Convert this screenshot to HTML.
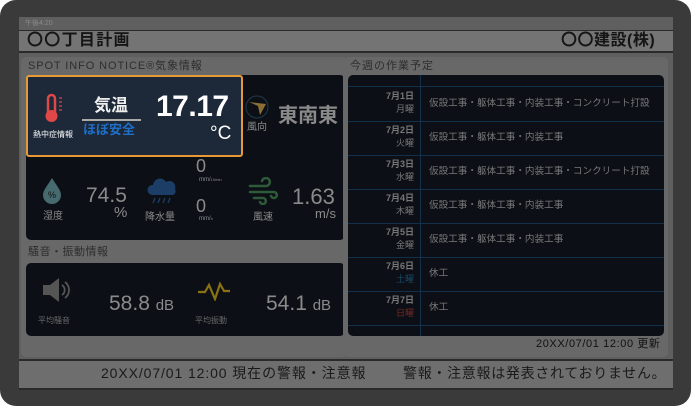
<!DOCTYPE html>
<html><head><meta charset="utf-8"><style>
*{margin:0;padding:0;box-sizing:border-box}
body{width:691px;height:406px;background:#fff;position:relative;overflow:hidden;font-family:"Liberation Sans","Noto Sans CJK JP",sans-serif}
.a{position:absolute}
.frame{left:0;top:0;width:691px;height:406px;background:#3a3a3a;border-radius:16px}
.scr{left:19px;top:17px;width:654px;height:373px;background:#5f5f5f}
.t{white-space:nowrap;line-height:1}
.dark{background:#0c1016;border-radius:5px}
.g{color:#8a8a8a}
</style></head><body>
<div class="a frame"></div>
<div class="a scr"></div>
<div class="a t" style="left:25px;top:20px;font-size:7px;color:#8a8a8a">午後4:20</div>
<div class="a" style="left:19px;top:30px;width:654px;height:23px;background:#747474;border-top:1px solid #2a2a2a;border-bottom:2px solid #2a2a2a"></div>
<div class="a t" style="left:27px;top:33px;font-size:16px;font-weight:bold;color:#151515;letter-spacing:1.3px">〇〇丁目計画</div>
<div class="a t" style="left:561px;top:33px;font-size:16px;font-weight:bold;color:#151515;letter-spacing:0.5px">〇〇建設(株)</div>
<!-- left panel -->
<div class="a" style="left:21px;top:57px;width:326px;height:300px;background:#686868;border-radius:5px"></div>
<div class="a t" style="left:28px;top:61px;font-size:11px;color:#2e2e2e;letter-spacing:0.9px">SPOT INFO NOTICE®気象情報</div>
<div class="a dark" style="left:26px;top:75px;width:319px;height:165px"></div>
<!-- highlight -->
<div class="a" style="left:26px;top:75px;width:217px;height:82px;background:#1d2839;border:2px solid #e69a35;border-radius:3px"></div>
<svg class="a" style="left:42px;top:93px" width="26" height="32" viewBox="0 0 26 32">
<rect x="6" y="2" width="7" height="20" rx="3.5" fill="none" stroke="#e04848" stroke-width="2.5"/>
<circle cx="9.5" cy="23" r="6" fill="#e04848"/>
<g stroke="#e04848" stroke-width="1.2"><line x1="17" y1="5" x2="20" y2="5"/><line x1="17" y1="9" x2="20" y2="9"/><line x1="17" y1="13" x2="20" y2="13"/><line x1="17" y1="17" x2="20" y2="17"/></g></svg>
<div class="a t" style="left:33px;top:131px;font-size:8px;color:#fff">熱中症情報</div>
<div class="a t" style="left:94px;top:97px;font-size:17px;font-weight:bold;color:#eee">気温</div>
<div class="a" style="left:82px;top:119px;width:59px;height:2px;background:#aaa"></div>
<div class="a t" style="left:83px;top:123px;font-size:13px;font-weight:bold;color:#1e6fc8">ほぼ安全</div>
<div class="a t" style="left:156px;top:92px;font-size:30px;font-weight:bold;color:#fff;letter-spacing:-0.5px">17.17</div>
<div class="a t" style="left:210px;top:124px;font-size:19px;color:#fff">°C</div>
<svg class="a" style="left:245px;top:95px" width="24" height="24" viewBox="0 0 24 24"><circle cx="12" cy="12" r="11" fill="none" stroke="#1e3a4a" stroke-width="1"/><path d="M4 7 L21 9 L15 20 L13 11 Z" fill="#8a6e35"/></svg>
<div class="a t g" style="left:247px;top:123px;font-size:10px">風向</div>
<div class="a t g" style="left:278px;top:106px;font-size:20px;font-weight:bold">東南東</div>
<!-- row2 -->
<svg class="a" style="left:42px;top:177px" width="20" height="27" viewBox="0 0 20 27"><path d="M10 1 C14 8 19 13 19 18 A9 9 0 0 1 1 18 C1 13 6 8 10 1Z" fill="#476a6e"/><text x="10" y="21" font-size="9" text-anchor="middle" fill="#111" font-family="Liberation Sans">%</text></svg>
<div class="a t g" style="left:43px;top:212px;font-size:10px">湿度</div>
<div class="a t g" style="left:86px;top:185px;font-size:21px">74.5</div>
<div class="a t g" style="left:114px;top:205px;font-size:15px">%</div>
<svg class="a" style="left:146px;top:177px" width="32" height="28" viewBox="0 0 32 28"><path d="M6 18 A5 5 0 0 1 7 8 A7 7 0 0 1 20 5 A6 6 0 0 1 29 12 A4 4 0 0 1 27 18Z" fill="#1c3e66"/><g stroke="#1c3e66" stroke-width="1.3"><line x1="9" y1="21" x2="7" y2="26"/><line x1="14" y1="21" x2="12" y2="26"/><line x1="19" y1="21" x2="17" y2="26"/><line x1="24" y1="21" x2="22" y2="26"/></g></svg>
<div class="a t g" style="left:145px;top:213px;font-size:10px">降水量</div>
<div class="a t g" style="left:196px;top:157px;font-size:18px">0</div>
<div class="a t g" style="left:199px;top:177px;font-size:6px">mm/<span style="font-size:4px">10min</span></div>
<div class="a t g" style="left:196px;top:197px;font-size:18px">0</div>
<div class="a t g" style="left:199px;top:216px;font-size:6px">mm/<span style="font-size:4px">h</span></div>
<svg class="a" style="left:248px;top:177px" width="30" height="28" viewBox="0 0 30 28"><g fill="none" stroke="#2f5a3a" stroke-width="2.5" stroke-linecap="round"><path d="M2 9 H18 A4 4 0 1 0 14 4"/><path d="M2 15 H26 A3 3 0 1 1 23 19"/><path d="M6 21 H15 A3 3 0 1 1 12 25"/></g></svg>
<div class="a t g" style="left:253px;top:213px;font-size:10px">風速</div>
<div class="a t g" style="left:292px;top:186px;font-size:22px">1.63</div>
<div class="a t g" style="left:315px;top:207px;font-size:13px">m/s</div>
<!-- noise -->
<div class="a t" style="left:28px;top:247px;font-size:11px;color:#2e2e2e;letter-spacing:0.5px">騒音・振動情報</div>
<div class="a dark" style="left:26px;top:263px;width:319px;height:73px"></div>
<svg class="a" style="left:42px;top:277px" width="32" height="26" viewBox="0 0 32 26"><path d="M1 8 H8 L17 1 V25 L8 18 H1Z" fill="#555"/><g fill="none" stroke="#555" stroke-width="1.8"><path d="M20 8 A6 6 0 0 1 20 18"/><path d="M23 5 A10 10 0 0 1 23 21"/></g></svg>
<div class="a t" style="left:38px;top:317px;font-size:8px;color:#666">平均騒音</div>
<div class="a t g" style="left:109px;top:293px;font-size:21px">58.8 <span style="font-size:15px">dB</span></div>
<svg class="a" style="left:197px;top:281px" width="34" height="20" viewBox="0 0 34 20"><path d="M1 11 H8 L12 4 L18 18 L23 3 L27 10 H33" fill="none" stroke="#8a7112" stroke-width="2.2"/></svg>
<div class="a t" style="left:195px;top:317px;font-size:8px;color:#666">平均振動</div>
<div class="a t g" style="left:266px;top:293px;font-size:21px">54.1 <span style="font-size:15px">dB</span></div>
<!-- right panel -->
<div class="a" style="left:343px;top:57px;width:325px;height:300px;background:#686868;border-radius:5px"></div>
<div class="a t" style="left:350px;top:61px;font-size:11px;color:#2e2e2e;letter-spacing:1px">今週の作業予定</div>
<div class="a dark" style="left:348px;top:75px;width:316px;height:261px;overflow:hidden">
 <div class="a" style="left:72px;top:0;width:1px;height:261px;background:#123049"></div>
 <div class="a" style="left:0;top:11px;width:316px;height:1px;background:#123049"></div>
</div>
<div id="rows"></div>
<script>
var d=[["7月1日","月曜","仮設工事・躯体工事・内装工事・コンクリート打設","#777"],["7月2日","火曜","仮設工事・躯体工事・内装工事","#777"],["7月3日","水曜","仮設工事・躯体工事・内装工事・コンクリート打設","#777"],["7月4日","木曜","仮設工事・躯体工事・内装工事","#777"],["7月5日","金曜","仮設工事・躯体工事・内装工事","#777"],["7月6日","土曜","休工","#16486a"],["7月7日","日曜","休工","#7a2424"]];
var h="";for(var i=0;i<7;i++){var y=87+i*34;
h+='<div class="a t" style="left:348px;top:'+(y+5)+'px;width:66px;text-align:right;font-size:9px;font-weight:bold;color:#777">'+d[i][0]+'</div>';
h+='<div class="a t" style="left:348px;top:'+(y+18)+'px;width:66px;text-align:right;font-size:9px;color:'+d[i][3]+'">'+d[i][1]+'</div>';
h+='<div class="a t" style="left:429px;top:'+(y+12)+'px;font-size:9.6px;color:#777">'+d[i][2]+'</div>';
h+='<div class="a" style="left:348px;top:'+(y+34)+'px;width:316px;height:1px;background:#123049"></div>';}
document.getElementById("rows").innerHTML=h;
</script>
<div class="a t" style="left:536px;top:339px;font-size:11px;color:#111;letter-spacing:0.6px">20XX/07/01 12:00 更新</div>
<!-- footer -->
<div class="a" style="left:19px;top:359px;width:654px;height:31px;background:#6e6e6e;border-top:2px solid #2a2a2a;border-bottom:2px solid #2a2a2a"></div>
<div class="a t" style="left:101px;top:366px;font-size:14px;color:#1a1a1a;letter-spacing:0.9px">20XX/07/01 12:00 現在の警報・注意報</div>
<div class="a t" style="left:403px;top:366px;font-size:14px;color:#1a1a1a;letter-spacing:0.7px">警報・注意報は発表されておりません。</div>
</body></html>
